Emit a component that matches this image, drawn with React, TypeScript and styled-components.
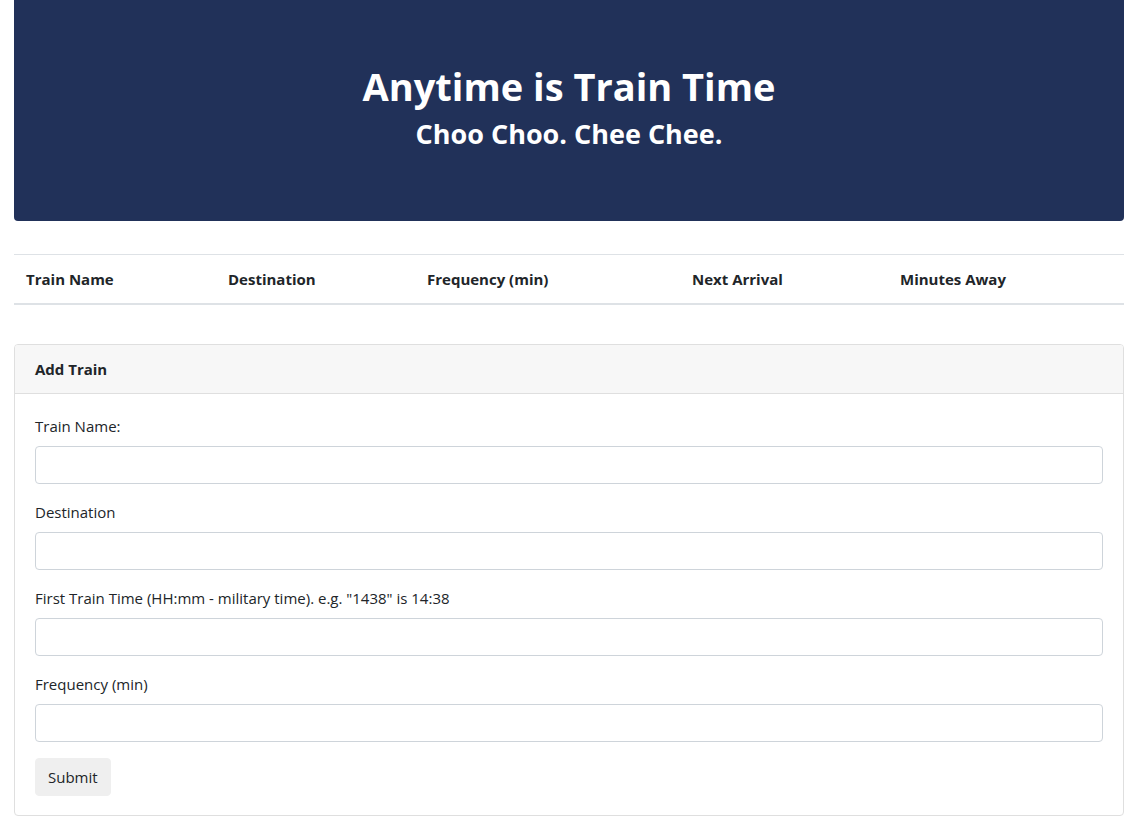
import React from "react";
import styled, { createGlobalStyle } from "styled-components";

const Global = createGlobalStyle`
  html, body { margin: 0; padding: 0; background: #fff; }
  body {
    font-family: "Open Sans", "Noto Sans", sans-serif;
    font-size: 16px;
    line-height: 24px;
    color: #212529;
  }
  * { box-sizing: border-box; }
`;

const Page = styled.div`
  width: 1110px;
  margin-left: 14px;
  padding-bottom: 16px;
`;

const Jumbotron = styled.header`
  background: #213159;
  color: #fff;
  border-radius: 0 0 4px 4px;
  padding: 62px 32px 70px;
  margin-bottom: 33px;
  text-align: center;
  display: flex;
  flex-direction: column;
  gap: 7px;
`;

const Title = styled.h1`
  margin: 0;
  font-size: 38px;
  line-height: 48px;
  font-weight: 700;
`;

const Subtitle = styled.h3`
  margin: 0;
  font-size: 27px;
  line-height: 34px;
  font-weight: 700;
`;

const Table = styled.div`
  display: grid;
  grid-template-columns: 202px 199px 265px 208px 1fr;
  border-top: 1px solid #dee2e6;
  border-bottom: 2px solid #dee2e6;
  margin-bottom: 39px;
`;

const Th = styled.div`
  padding: 12px;
  font-weight: 700;
  font-size: 15px;
`;

const Card = styled.section`
  border: 1px solid #dfdfdf;
  border-radius: 4px;
  overflow: hidden;
`;

const CardHeader = styled.div`
  background: #f7f7f7;
  border-bottom: 1px solid #dfdfdf;
  padding: 12px 20px;
  font-weight: 700;
  font-size: 15px;
`;

const CardBody = styled.form`
  padding: 20px 20px 19px;
`;

const Group = styled.div`
  margin-bottom: 16px;
`;

const Label = styled.label`
  display: block;
  margin-bottom: 8px;
  font-size: 15px;
`;

const Input = styled.input`
  display: block;
  width: 100%;
  height: 38px;
  padding: 6px 12px;
  font: inherit;
  border: 1px solid #ced4da;
  border-radius: 4px;
  background: #fff;
  outline: none;
`;

const Button = styled.button`
  font: inherit;
  font-size: 15px;
  color: #212529;
  background: #efefef;
  border: 1px solid #efefef;
  border-radius: 4px;
  padding: 6px 12px;
  height: 38px;
  line-height: 24px;
  cursor: pointer;
`;

const headers = ["Train Name", "Destination", "Frequency (min)", "Next Arrival", "Minutes Away"];
const fields = [
  "Train Name:",
  "Destination",
  'First Train Time (HH:mm - military time). e.g. "1438" is 14:38',
  "Frequency (min)",
];

export default function App() {
  return (
    <>
      <Global />
      <Page>
        <Jumbotron>
          <Title>Anytime is Train Time</Title>
          <Subtitle>Choo Choo. Chee Chee.</Subtitle>
        </Jumbotron>
        <Table>
          {headers.map((h) => (
            <Th key={h}>{h}</Th>
          ))}
        </Table>
        <Card>
          <CardHeader>Add Train</CardHeader>
          <CardBody onSubmit={(e) => e.preventDefault()}>
            {fields.map((f, i) => (
              <Group key={i}>
                <Label htmlFor={`f${i}`}>{f}</Label>
                <Input id={`f${i}`} type="text" />
              </Group>
            ))}
            <Button type="submit">Submit</Button>
          </CardBody>
        </Card>
      </Page>
    </>
  );
}
